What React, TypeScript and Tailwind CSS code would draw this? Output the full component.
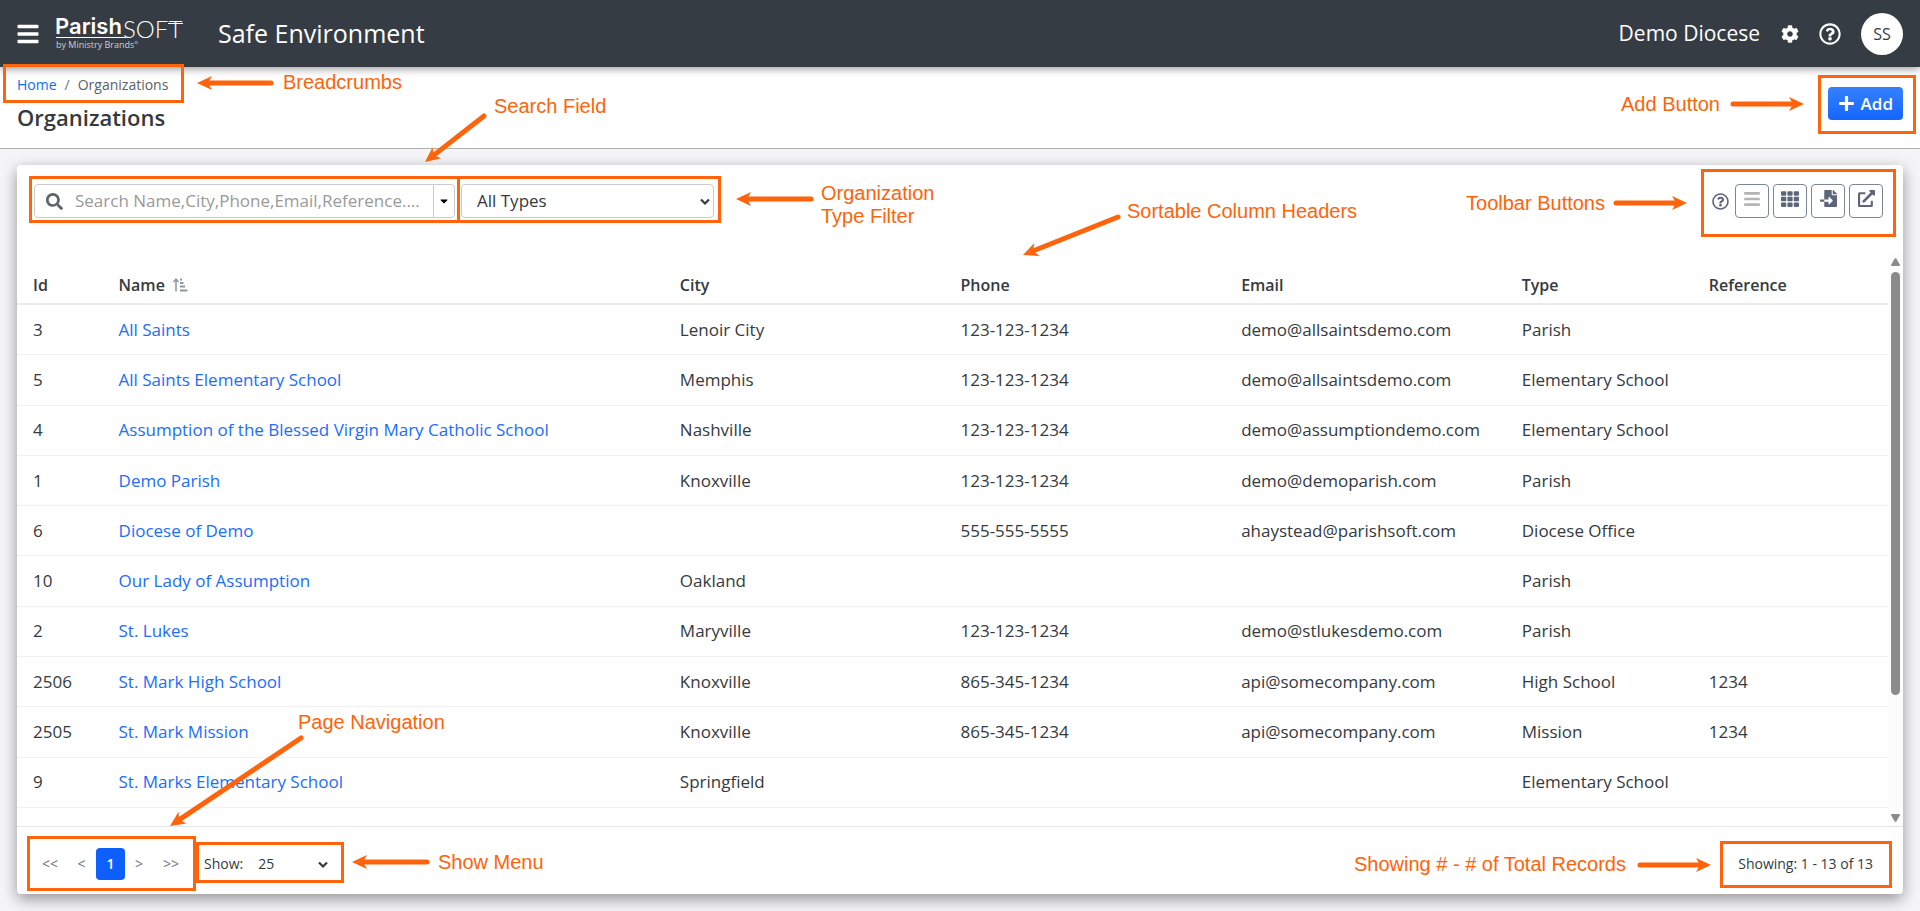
import React from 'react';
import {
  FaBars,
  FaCog,
  FaRegQuestionCircle,
  FaSearch,
  FaPlus,
  FaTh,
  FaFileImport,
  FaExternalLinkAlt,
  FaCaretDown,
} from 'react-icons/fa';
import { clsx } from 'clsx';

type Organization = {
  id: number;
  name: string;
  city?: string;
  phone?: string;
  email?: string;
  type: string;
  reference?: string;
};

const organizations: Organization[] = [
  { id: 3, name: 'All Saints', city: 'Lenoir City', phone: '123-123-1234', email: 'demo@allsaintsdemo.com', type: 'Parish' },
  { id: 5, name: 'All Saints Elementary School', city: 'Memphis', phone: '123-123-1234', email: 'demo@allsaintsdemo.com', type: 'Elementary School' },
  { id: 4, name: 'Assumption of the Blessed Virgin Mary Catholic School', city: 'Nashville', phone: '123-123-1234', email: 'demo@assumptiondemo.com', type: 'Elementary School' },
  { id: 1, name: 'Demo Parish', city: 'Knoxville', phone: '123-123-1234', email: 'demo@demoparish.com', type: 'Parish' },
  { id: 6, name: 'Diocese of Demo', phone: '555-555-5555', email: 'ahaystead@parishsoft.com', type: 'Diocese Office' },
  { id: 10, name: 'Our Lady of Assumption', city: 'Oakland', type: 'Parish' },
  { id: 2, name: 'St. Lukes', city: 'Maryville', phone: '123-123-1234', email: 'demo@stlukesdemo.com', type: 'Parish' },
  { id: 2506, name: 'St. Mark High School', city: 'Knoxville', phone: '865-345-1234', email: 'api@somecompany.com', type: 'High School', reference: '1234' },
  { id: 2505, name: 'St. Mark Mission', city: 'Knoxville', phone: '865-345-1234', email: 'api@somecompany.com', type: 'Mission', reference: '1234' },
  { id: 9, name: 'St. Marks Elementary School', city: 'Springfield', type: 'Elementary School' },
];

const columns = [
  { label: 'Id', width: 'w-[5%]' },
  { label: 'Name', width: 'w-[30%]', sorted: true },
  { label: 'City', width: 'w-[15%]' },
  { label: 'Phone', width: 'w-[15%]' },
  { label: 'Email', width: 'w-[15%]' },
  { label: 'Type', width: 'w-[10%]' },
  { label: 'Reference', width: 'w-[10%]' },
];

const Logo = () => (
  <svg width="132" height="48" viewBox="0 0 132 48" role="img" aria-label="ParishSoft by Ministry Brands" fill="#fff">
    <text x="-1" y="24" fontSize="22" fontWeight="600" fontFamily="Inter, sans-serif">Parish</text>
    <text x="67" y="28" fontSize="24" fontWeight="300" fontFamily="Lato, sans-serif">SOFT</text>
    <path d="M0 27.500h70M112 13.500h15" stroke="#fff" strokeWidth="1" />
    <text x="0" y="38" fontSize="9" fillOpacity="0.75" fontFamily="'Open Sans', sans-serif">by Ministry Brands°</text>
  </svg>
);

const SortIcon = () => (
  <svg width="15" height="14" viewBox="0 0 15 14" fill="none" stroke="#8d97a5" strokeWidth="1.500">
    <path d="M3 13.500V1.500M0.500 4L3 1.200L5.500 4" />
    <path d="M7 1.500h2M7 5h3.500M7 8.500h5M7 12.500h7.500" strokeWidth="2" />
  </svg>
);

const SelectChevron = ({ className }: { className: string }) => (
  <svg className={clsx('pointer-events-none absolute', className)} width="10" height="8" viewBox="0 0 10 8" fill="none">
    <path d="M1 1.500L5 5.500L9 1.500" stroke="#343a40" strokeWidth="2.200" />
  </svg>
);

const Header = () => (
  <header className="relative z-10 flex h-[67px] items-center bg-[#363c44] px-4 text-white shadow-[0_2px_8px_rgba(0,0,0,0.4)]">
    <button aria-label="Menu" className="mr-4">
      <FaBars size={24} />
    </button>
    <Logo />
    <span className="ml-[30px] text-[25px]">Safe Environment</span>
    <div className="ml-auto flex items-center">
      <span className="text-[21px]">Demo Diocese</span>
      <button aria-label="Settings" className="ml-[21px]">
        <FaCog size={18} />
      </button>
      <button aria-label="Help" className="ml-5">
        <FaRegQuestionCircle size={22} />
      </button>
      <button className="mr-px ml-5 size-[42px] rounded-full bg-white text-base text-[#363c44]">SS</button>
    </div>
  </header>
);

const PageTitle = () => (
  <div className="flex items-start justify-between border-b border-[#b0b0b0] bg-white px-[17px] pt-2 pb-[15px]">
    <div>
      <nav aria-label="Breadcrumb" className="flex gap-2 text-sm leading-5">
        <a href="#" className="text-[#0d6efd]">Home</a>
        <span className="text-[#6c757d]">/</span>
        <span className="text-[#5a6169]">Organizations</span>
      </nav>
      <h1 className="mt-1.5 text-[22px] leading-8 font-semibold text-[#343a40]">Organizations</h1>
    </div>
    <button className="mt-3 flex h-[33px] items-center gap-1.5 rounded bg-linear-to-b from-[#3580ff] to-[#1366ff] px-[10px] text-[17px] font-semibold text-white">
      <FaPlus size={17} />
      Add
    </button>
  </div>
);

const toolbarButton = 'flex h-[34px] w-[34px] justify-center rounded border border-[#7c8796] pt-[5px]';

const Toolbar = () => (
  <div className="flex items-center justify-between px-[17px] pt-[19px] pb-9">
    <div className="flex gap-1.5">
      <div className="flex h-[34px] w-[421px] items-center rounded border border-[#ccc]">
        <label htmlFor="search" className="flex w-[38px] justify-center text-[#5f6368]">
          <FaSearch size={17} aria-label="Search" />
        </label>
        <input
          id="search"
          type="text"
          placeholder="Search Name,City,Phone,Email,Reference...."
          className="min-w-0 flex-1 bg-transparent pl-0.5 text-[17px] outline-none placeholder:text-[#9a9a9a]"
        />
        <button aria-label="Search options" className="flex h-full w-[21px] items-center justify-center border-l border-[#ccc] text-black">
          <FaCaretDown size={12} />
        </button>
      </div>
      <div className="relative">
        <select
          aria-label="Organization type"
          className="h-[34px] w-[253px] appearance-none rounded border border-[#ccc] bg-white px-[15px] text-[17px] text-[#343a40]"
        >
          <option>All Types</option>
        </select>
        <SelectChevron className="top-[14px] right-1" />
      </div>
    </div>
    <div className="mr-[3px] flex items-center gap-1">
      <button aria-label="Help" className="mr-0.5 text-[#5c6579]">
        <FaRegQuestionCircle size={17} />
      </button>
      <button aria-label="List view" className={clsx(toolbarButton, 'text-[#b5b5b5]')}>
        <FaBars size={18} />
      </button>
      <button aria-label="Grid view" className={clsx(toolbarButton, 'text-[#5c6579]')}>
        <FaTh size={18} />
      </button>
      <button aria-label="Import" className={clsx(toolbarButton, 'text-[#5c6579]')}>
        <FaFileImport size={17} />
      </button>
      <button aria-label="Export" className={clsx(toolbarButton, 'text-[#5c6579]')}>
        <FaExternalLinkAlt size={17} />
      </button>
    </div>
  </div>
);

const OrganizationsTable = () => (
  <table className="w-full table-fixed border-separate border-spacing-0 text-left text-[17px] leading-6 text-[#343a40]">
    <thead>
      <tr className="h-[51px]">
        {columns.map((column) => (
          <th key={column.label} className={clsx(column.width, 'border-b-2 border-[#ebebeb] px-2 pt-3 text-base font-semibold first:pl-4')}>
            <button className="flex items-center gap-2">
              {column.label}
              {column.sorted && <SortIcon />}
            </button>
          </th>
        ))}
      </tr>
    </thead>
    <tbody className="[&_td]:border-b [&_td]:border-[#f1f1f1] [&_td]:px-2 [&_td]:py-3 [&_td:first-child]:pl-4">
      {organizations.map((org) => (
        <tr key={org.id}>
          <td>{org.id}</td>
          <td>
            <a href="#" className="text-[#1a6dff]">{org.name}</a>
          </td>
          <td>{org.city}</td>
          <td>{org.phone}</td>
          <td>{org.email}</td>
          <td>{org.type}</td>
          <td>{org.reference}</td>
        </tr>
      ))}
    </tbody>
  </table>
);

const Scrollbar = () => (
  <div className="flex w-[15px] flex-col items-center bg-[#fcfcfc] py-1 text-[#8b8b8b]">
    <svg width="9" height="8" viewBox="0 0 9 8" fill="currentColor">
      <path d="M3.500 0.800q1-1 2 0L9 7q0 1-1 1H1Q0 8 0 7z" />
    </svg>
    <div className="my-1.5 flex w-full flex-1 flex-col items-center">
      <div className="h-[79%] w-[9px] rounded-full bg-current" />
    </div>
    <svg width="9" height="8" viewBox="0 0 9 8" fill="currentColor">
      <path d="M3.500 7.200q1 1 2 0L9 1q0-1-1-1H1Q0 0 0 1z" />
    </svg>
  </div>
);

const Footer = () => (
  <div className="flex items-center justify-between border-t border-[#e4e4e4] px-4 pt-[21px] pb-[14px] text-sm text-[#343a40]">
    <div className="flex items-center">
      <nav aria-label="Pagination" className="flex h-8 items-center text-[#6c757d]">
        <button className="w-[34px]">&lt;&lt;</button>
        <button className="w-[29px]">&lt;</button>
        <button aria-current="page" className="h-8 w-[29px] rounded bg-[#0d5fff] font-semibold text-white">1</button>
        <button className="w-[28px]">&gt;</button>
        <button className="w-[36px]">&gt;&gt;</button>
      </nav>
      <label htmlFor="page-size" className="ml-[15px]">Show:</label>
      <div className="relative ml-[15px]">
        <select id="page-size" className="w-[70px] appearance-none bg-transparent">
          <option>25</option>
        </select>
        <SelectChevron className="top-[7px] right-0" />
      </div>
    </div>
    <span className="mr-3.5">Showing: 1 - 13 of 13</span>
  </div>
);

const Outline = ({ className }: { className: string }) => (
  <div className={clsx('absolute border-3 border-[#ff630b]', className)} />
);

const Note = ({ className, children }: { className: string; children: React.ReactNode }) => (
  <div className={clsx('absolute whitespace-nowrap', className)}>{children}</div>
);

// Draws from the tail (x1, y1) to the tip (x2, y2) in its own box
const Arrow = ({ className, width, height, x1, y1, x2, y2 }: {
  className: string; width: number; height: number; x1: number; y1: number; x2: number; y2: number;
}) => {
  const length = Math.hypot(x2 - x1, y2 - y1);
  const angle = (Math.atan2(y2 - y1, x2 - x1) * 180) / Math.PI;
  return (
    <svg className={clsx('absolute overflow-visible', className)} width={width} height={height}>
      <g transform={`translate(${x1} ${y1}) rotate(${angle})`} fill="#ff630b">
        <path d={`M0 0H${length - 10}`} stroke="#ff630b" strokeWidth="5" strokeLinecap="round" />
        <path d={`M${length} 0L${length - 15} -7L${length - 11} 0L${length - 15} 7Z`} />
      </g>
    </svg>
  );
};

const Annotations = () => (
  <div className="pointer-events-none absolute inset-0 z-20 font-['Liberation_Sans',Arial,sans-serif] text-[20px] leading-[23px] text-[#ff630b]">
    <Outline className="top-16 left-[3px] h-[39px] w-[181px]" />
    <Arrow className="top-[76px] left-[197px]" width={77} height={14} x1={74} y1={7} x2={0} y2={7} />
    <Note className="top-[71px] left-[283px]">Breadcrumbs</Note>

    <Outline className="top-[176px] left-[29px] h-[47px] w-[431px]" />
    <Arrow className="top-[113px] left-[424px]" width={62} height={50} x1={60} y1={3} x2={1} y2={49} />
    <Note className="top-[95px] left-[494px]">Search Field</Note>

    <Outline className="top-[176px] left-[457px] h-[47px] w-[264px]" />
    <Arrow className="top-[192px] left-[735px]" width={77} height={14} x1={76} y1={7} x2={1} y2={7} />
    <Note className="top-[182px] left-[821px]">
      Organization
      <br />
      Type Filter
    </Note>

    <Arrow className="top-[214px] left-[1023px]" width={98} height={42} x1={95} y1={3} x2={0} y2={41} />
    <Note className="top-[200px] left-[1127px]">Sortable Column Headers</Note>

    <Outline className="top-[75px] right-1 h-[59px] w-[98px]" />
    <Arrow className="top-[97px] right-[115px]" width={75} height={14} x1={3} y1={7} x2={74} y2={7} />
    <Note className="top-[93px] right-[200px]">Add Button</Note>

    <Outline className="top-[169px] right-6 h-[68px] w-[195px]" />
    <Arrow className="top-[196px] right-[232px]" width={75} height={14} x1={3} y1={7} x2={74} y2={7} />
    <Note className="top-[192px] right-[315px]">Toolbar Buttons</Note>

    <Outline className="bottom-5 left-[27px] h-[55px] w-[169px]" />
    <Arrow className="bottom-[84px] left-[169px]" width={136} height={92} x1={132} y1={3} x2={1} y2={91} />
    <Note className="bottom-[177px] left-[298px]">Page Navigation</Note>

    <Outline className="bottom-7 left-[196px] h-[41px] w-[148px]" />
    <Arrow className="bottom-[42px] left-[352px]" width={77} height={14} x1={75} y1={7} x2={0} y2={7} />
    <Note className="bottom-[37px] left-[438px]">Show Menu</Note>

    <Outline className="right-7 bottom-[23px] h-[47px] w-[172px]" />
    <Arrow className="right-[208px] bottom-[39px]" width={75} height={14} x1={3} y1={7} x2={74} y2={7} />
    <Note className="right-[294px] bottom-[35px]">Showing # - # of Total Records</Note>
  </div>
);

const App = () => {
  return (
    <div className="relative flex min-h-screen flex-col bg-[#f5f5f7] font-['Open_Sans','Noto_Sans',sans-serif]">
      <Header />
      <PageTitle />

      <main className="flex flex-1 flex-col px-[17px] pt-4 pb-[17px]">
        <section className="flex flex-1 flex-col rounded bg-white shadow-[0_5px_15px_rgba(0,0,0,0.4)]">
          <Toolbar />
          <div className="flex flex-1">
            <div className="grid flex-1 pb-[18px]">
              <OrganizationsTable />
            </div>
            <Scrollbar />
          </div>
          <Footer />
        </section>
      </main>

      <Annotations />
    </div>
  );
};

export default App;
